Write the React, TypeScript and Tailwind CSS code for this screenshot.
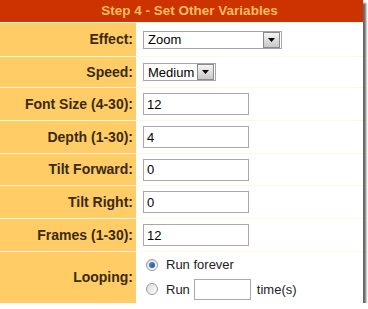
const FONT = "font-['Liberation_Sans',Arial,sans-serif]";

function DropButton() {
  return (
    <div className="flex h-[16px] w-[17px] items-center justify-center border border-[#8a8a8a] bg-gradient-to-b from-[#f4f4f4] to-[#c8c8c8]">
      <svg width="7" height="4" viewBox="0 0 7 4">
        <path d="M0 0h7L3.5 4z" fill="#000" />
      </svg>
    </div>
  );
}

function Select({ value, width }: { value: string; width: string }) {
  return (
    <div className={`flex h-[18px] items-center justify-between border border-[#a5a5a5] bg-white pl-[4px] pr-px ${width}`}>
      <span className="text-[13px] leading-none text-black">{value}</span>
      <DropButton />
    </div>
  );
}

function TextBox({ value, width = "w-[106px]", height = "h-[22px]" }: { value: string; width?: string; height?: string }) {
  return (
    <div className={`flex items-center border border-[#a9a9a9] bg-white pl-[3px] text-[13px] leading-none text-black ${width} ${height}`}>
      {value}
    </div>
  );
}

function Radio({ checked }: { checked?: boolean }) {
  return (
    <span className="flex h-[12px] w-[12px] items-center justify-center rounded-full border border-[#9a9a9a] bg-gradient-to-br from-[#dcdcdc] to-white">
      {checked && <span className="h-[6px] w-[6px] rounded-full bg-gradient-to-br from-[#5a8fd0] to-[#1c4f9c]" />}
    </span>
  );
}

function Row({ label, h, children }: { label: string; h: string; children: React.ReactNode }) {
  return (
    <div className={`flex ${h}`}>
      <div className="flex w-[136px] items-center justify-end bg-[#ffcc66] pr-[3px] text-[14px] font-bold text-[#3a2a12]">
        {label}
      </div>
      <div className="flex flex-1 items-center pl-[7px]">{children}</div>
    </div>
  );
}

export default function App() {
  return (
    <div className={`w-[363px] bg-white shadow-[3px_3px_2px_rgba(0,0,0,0.6)] ${FONT}`}>
      <div className="flex h-[22px] items-center justify-center bg-[#cc3300] pl-[16px] text-[13.5px] font-bold text-[#f9bd62]">
        Step 4 - Set Other Variables
      </div>
      <div className="flex flex-col gap-px bg-[#fff6e6] pt-px">
        <Row label="Effect:" h="h-[33px] bg-white">
          <Select value="Zoom" width="w-[139px]" />
        </Row>
        <Row label="Speed:" h="h-[30px] bg-white">
          <Select value="Medium" width="w-[73px]" />
        </Row>
        <Row label="Font Size (4-30):" h="h-[32px] bg-white">
          <TextBox value="12" />
        </Row>
        <Row label="Depth (1-30):" h="h-[32px] bg-white">
          <TextBox value="4" />
        </Row>
        <Row label="Tilt Forward:" h="h-[31px] bg-white">
          <TextBox value="0" />
        </Row>
        <Row label="Tilt Right:" h="h-[32px] bg-white">
          <TextBox value="0" />
        </Row>
        <Row label="Frames (1-30):" h="h-[32px] bg-white">
          <TextBox value="12" />
        </Row>
        <Row label="Looping:" h="h-[51px] bg-white">
          <div className="flex flex-col gap-[4px] pl-[3px] text-[13px] text-[#222]">
            <div className="flex items-center gap-[8px]">
              <Radio checked />
              <span>Run forever</span>
            </div>
            <div className="flex items-center">
              <Radio />
              <span className="ml-[8px]">Run</span>
              <span className="ml-[4px]">
                <TextBox value="" width="w-[57px]" height="h-[21px]" />
              </span>
              <span className="ml-[6px]">time(s)</span>
            </div>
          </div>
        </Row>
      </div>
    </div>
  );
}
